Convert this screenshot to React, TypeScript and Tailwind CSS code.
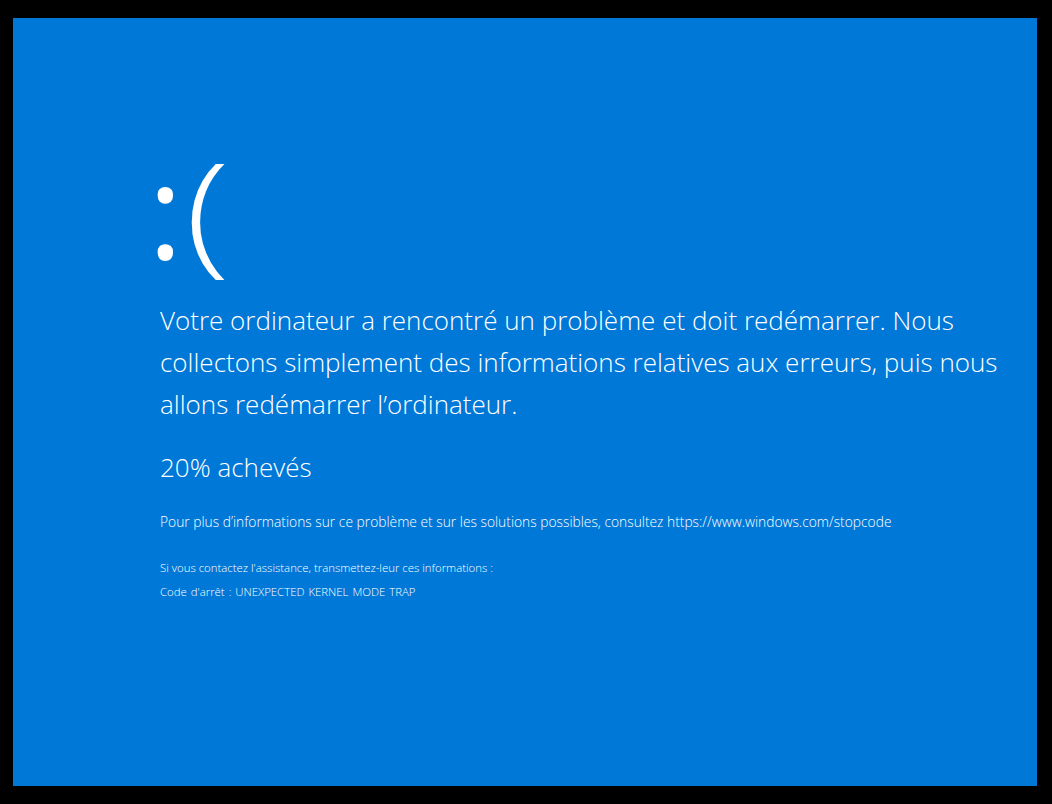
export default function App() {
  return (
    <div className="w-[1052px] h-[804px] bg-black pt-[18px] pl-[13px]">
      <div
        className="w-[1024px] h-[768px] bg-[#0078d7] text-white pl-[147px] pt-[124px]"
        style={{ fontFamily: '"Open Sans", "Noto Sans", sans-serif' }}
      >
        <div className="h-[150px] -ml-[12px] text-[132px] leading-none">
          <span className="font-normal">:</span>
          <span className="inline-block ml-[2px] font-light origin-left scale-x-[1.25]">(</span>
        </div>
        <p className="mt-[7px] w-[850px] text-[26px] leading-[42px] font-light">
          Votre ordinateur a rencontré un problème et doit redémarrer. Nous collectons simplement des
          informations relatives aux erreurs, puis nous allons redémarrer l’ordinateur.
        </p>
        <p className="mt-[21px] text-[26px] leading-[42px] font-light">20% achevés</p>
        <p className="mt-[24px] text-[13.8px] leading-[20px] font-light">
          Pour plus d’informations sur ce problème et sur les solutions possibles, consultez
          https://www.windows.com/stopcode
        </p>
        <div className="mt-[24px] text-[11.4px] leading-[24px] font-light">
          <p>Si vous contactez l'assistance, transmettez-leur ces informations :</p>
          <p className="[word-spacing:1px]">Code d'arrêt : UNEXPECTED KERNEL MODE TRAP</p>
        </div>
      </div>
    </div>
  );
}
